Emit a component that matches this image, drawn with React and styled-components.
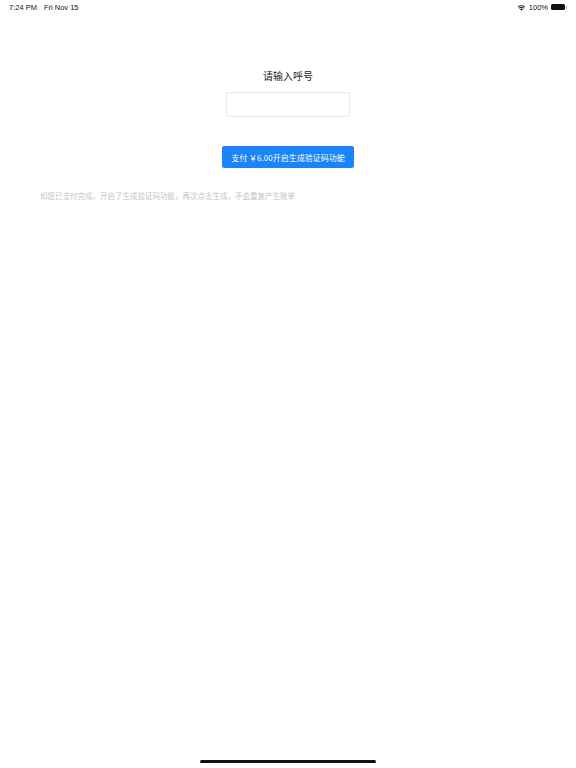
import React from "react"
import styled, {createGlobalStyle} from "styled-components"

const GlobalStyle = createGlobalStyle`
  html, body {
    margin: 0;
    padding: 0;
    background: #fff;
  }
  body {
    font-family: "Noto Sans CJK SC", "Liberation Sans", sans-serif;
  }
`

const SPage = styled.div`
  width: 576px;
  height: 768px;
  display: flex;
  flex-direction: column;
  background: #fff;
  overflow: hidden;
`

const SStatusBar = styled.div`
  height: 14px;
  padding: 0 9px 0 9px;
  display: flex;
  align-items: center;
  justify-content: space-between;
  font-family: "Liberation Sans", sans-serif;
  font-size: 7.5px;
  color: #111;
`

const SStatusLeft = styled.div`
  display: flex;
  gap: 7px;
`

const SStatusRight = styled.div`
  display: flex;
  align-items: center;
  gap: 3px;
`

const SBattery = styled.div`
  display: flex;
  align-items: center;
  & > div {
    width: 14px;
    height: 6px;
    border-radius: 1.5px;
    background: #111;
  }
  &::after {
    content: "";
    width: 1px;
    height: 3px;
    margin-left: 1px;
    background: #999;
    border-radius: 0 1px 1px 0;
  }
`

const SContent = styled.div`
  flex: 1;
  display: flex;
  flex-direction: column;
  align-items: center;
  padding-top: 55px;
`

const STitle = styled.div`
  font-size: 10px;
  color: #222;
  line-height: 14px;
`

const SInput = styled.input`
  margin-top: 9px;
  width: 124px;
  height: 25px;
  box-sizing: border-box;
  border: 1px solid #e8e8e8;
  border-radius: 2px;
  outline: none;
  background: #fff;
`

const SButton = styled.button`
  margin-top: 29px;
  width: 132px;
  height: 22px;
  border: none;
  border-radius: 2px;
  background: #1a84f8;
  color: #fff;
  font-family: "Noto Sans CJK SC", "Liberation Sans", sans-serif;
  font-size: 8px;
  padding: 0;
  cursor: pointer;
`

const SHint = styled.div`
  align-self: stretch;
  margin-top: 22px;
  padding-left: 40px;
  font-size: 7.5px;
  line-height: 12px;
  color: #c4c4c4;
`

const SHomeBar = styled.div`
  align-self: center;
  width: 176px;
  height: 3px;
  margin-bottom: 5px;
  border-radius: 2px;
  background: #111;
`

const WifiIcon = () => (
  <svg width="9" height="7" viewBox="0 0 18 13">
    <path d="M9 13 L6.2 9.9 A4 4 0 0 1 11.8 9.9 Z" fill="#111" />
    <path d="M3.9 7.4 A7.5 7.5 0 0 1 14.1 7.4 L12.7 8.9 A5.5 5.5 0 0 0 5.3 8.9 Z" fill="#111" />
    <path d="M1.5 4.8 A11 11 0 0 1 16.5 4.8 L15.1 6.3 A9 9 0 0 0 2.9 6.3 Z" fill="#111" />
  </svg>
)

const App = () => (
  <>
    <GlobalStyle />
    <SPage>
      <SStatusBar>
        <SStatusLeft>
          <span>7:24 PM</span>
          <span>Fri Nov 15</span>
        </SStatusLeft>
        <SStatusRight>
          <WifiIcon />
          <span>100%</span>
          <SBattery>
            <div />
          </SBattery>
        </SStatusRight>
      </SStatusBar>
      <SContent>
        <STitle>请输入呼号</STitle>
        <SInput type="text" />
        <SButton>支付 ￥6.00开启生成验证码功能</SButton>
        <SHint>如您已支付完成，开启了生成验证码功能，再次点击生成，不会重复产生账单</SHint>
      </SContent>
      <SHomeBar />
    </SPage>
  </>
)

export default App
